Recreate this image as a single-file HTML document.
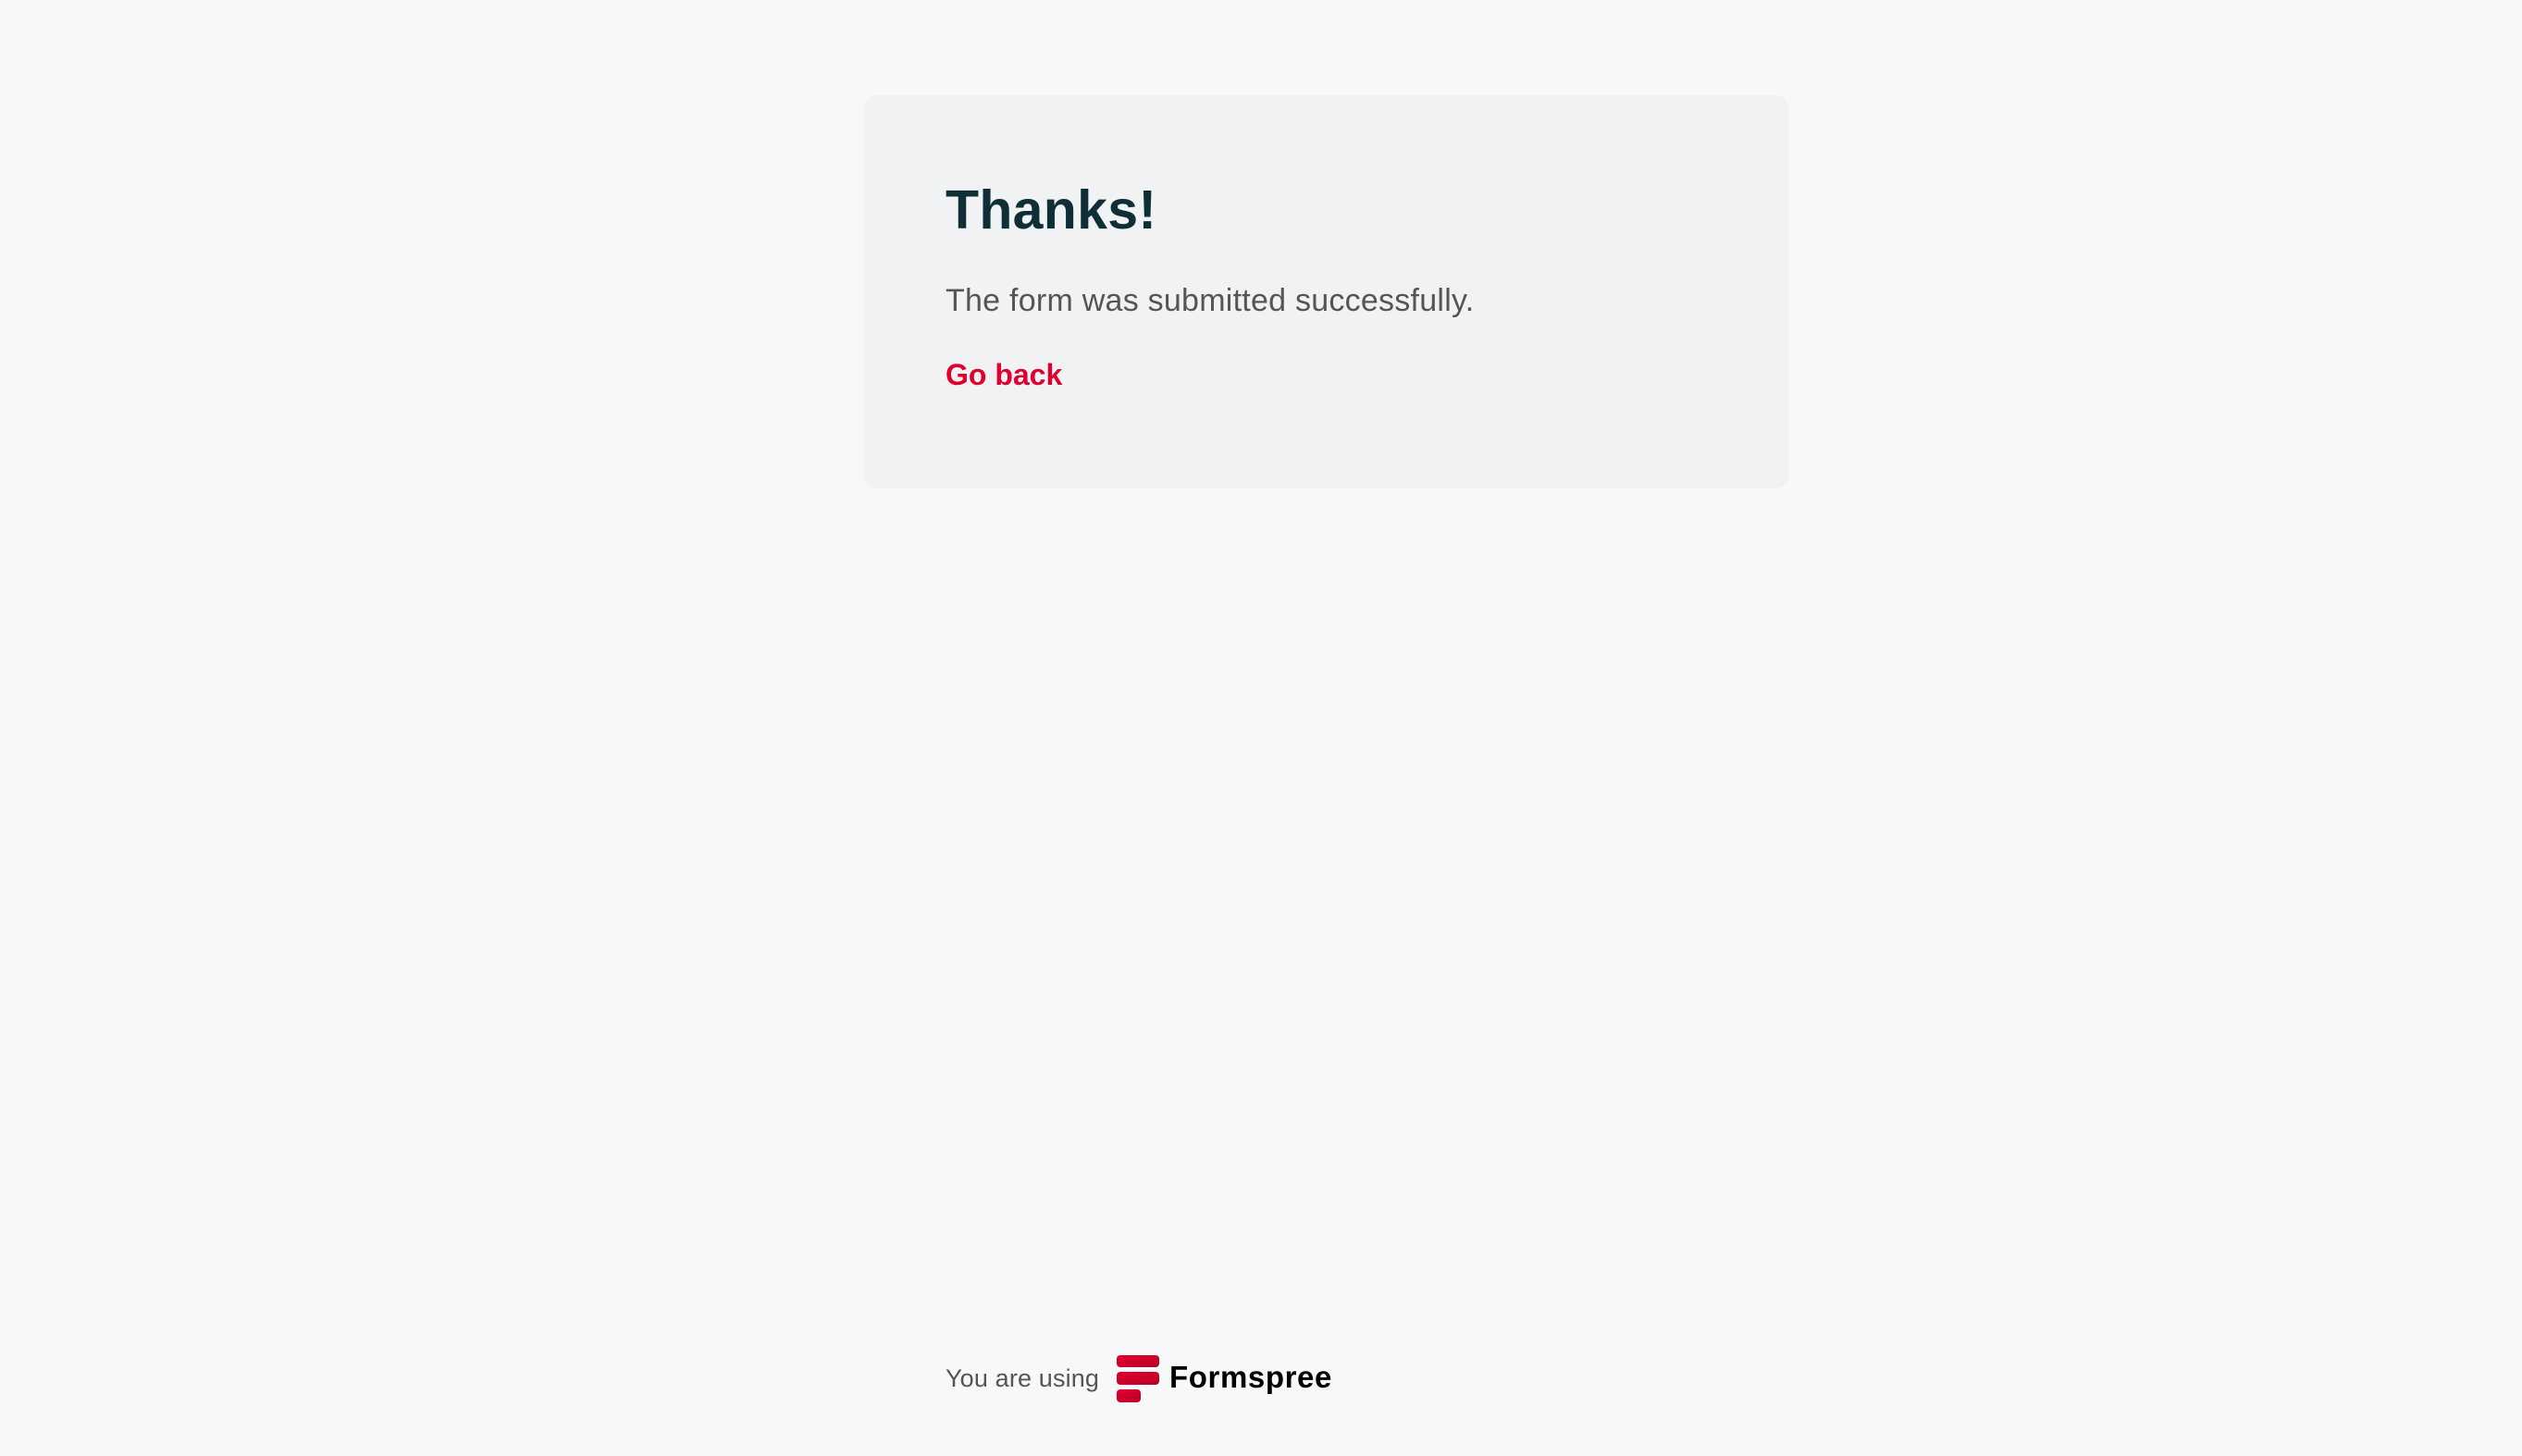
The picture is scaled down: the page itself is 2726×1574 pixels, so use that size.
<!DOCTYPE html>
<html><head><meta charset="utf-8"><style>
html,body{margin:0;padding:0;}
body{width:2726px;height:1574px;background:#f7f8fa;position:relative;overflow:hidden;font-family:"Liberation Sans",sans-serif;}
.card{position:absolute;left:934px;top:103px;width:999px;height:425px;background:#f1f2f4;border-radius:14px;}
.t{position:absolute;line-height:1;white-space:nowrap;}
</style></head><body>
<div class="card"></div>
<div class="t" style="left:1022px;top:198px;font-size:59px;font-weight:bold;color:#0f2f36;letter-spacing:0.3px;">Thanks!</div>
<div class="t" style="left:1022px;top:308px;font-size:34px;color:#555;letter-spacing:0.25px;">The form was submitted successfully.</div>
<div class="t" style="left:1022px;top:389px;font-size:32px;font-weight:bold;color:#e0002f;">Go back</div>
<div class="t" style="left:1022px;top:1477px;font-size:27px;color:#555;letter-spacing:0.15px;">You are using</div>
<svg style="position:absolute;left:1207px;top:1465px" width="46" height="52" viewBox="0 0 46 52">
<defs><linearGradient id="g" x1="0" y1="0" x2="1" y2="1"><stop offset="0" stop-color="#e2002d"/><stop offset="1" stop-color="#b80027"/></linearGradient></defs>
<rect x="0" y="0" width="46" height="13" rx="4" fill="url(#g)"/>
<rect x="0" y="18" width="46" height="14" rx="4" fill="url(#g)"/>
<rect x="0" y="37" width="26" height="14" rx="4" fill="url(#g)"/>
</svg>
<div class="t" style="left:1264px;top:1472px;font-size:33px;font-weight:bold;color:#000;letter-spacing:0.6px;">Formspree</div>
</body></html>
